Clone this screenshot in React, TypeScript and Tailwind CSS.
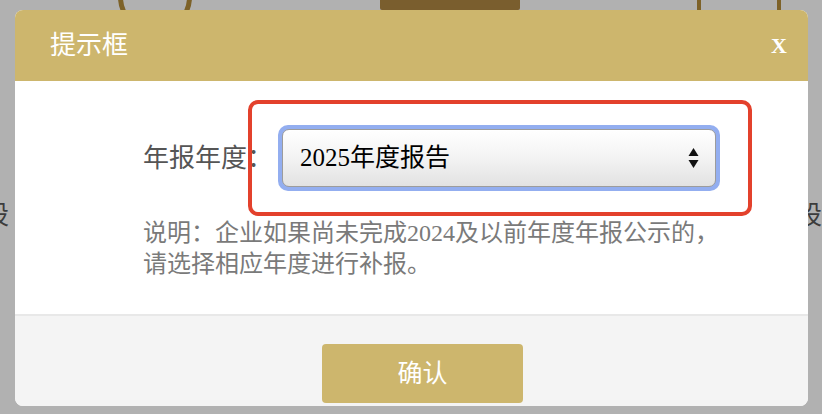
import React from "react";

const serif = "font-['Liberation_Serif','Noto_Sans_CJK_SC',serif]";

export default function App() {
  return (
    <div className={`relative w-[822px] h-[414px] overflow-hidden bg-[#b1b1b1] ${serif}`}>
      {/* page behind the overlay */}
      <div className="absolute left-[118px] top-[-40px] w-[74px] h-[74px] rounded-full border-[5px] border-[#7d6229]" />
      <div className="absolute left-[380px] top-0 w-[140px] h-[10px] bg-[#7a5e2e] rounded-b-[2px]" />
      <div className="absolute left-[697px] top-[-20px] w-[84px] h-[34px] border-[4px] border-[#7d6229]" />
      <div className="absolute left-[-17px] top-[196px] text-[26px] text-[#3c3c3c]">股</div>
      <div className="absolute left-[796px] top-[196px] text-[26px] text-[#3c3c3c]">股</div>

      {/* dialog */}
      <div className="relative pt-[10px] pl-[15px]">
        <div className="relative flex flex-col w-[793px] h-[396px] rounded-[8px] overflow-hidden bg-white">
          {/* Header */}
          <div className="flex items-center justify-between h-[71px] shrink-0 bg-[#cdb66d] pl-[35px] pr-[21px] text-white">
            <span className="text-[26px] leading-none">提示框</span>
            <span className="text-[22px] font-bold leading-none">X</span>
          </div>

          {/* Body */}
          <div className="h-[233px] shrink-0 pl-[128px] pt-[44px]">
            <div className="flex items-center">
              <span className="w-[135px] text-[26px] text-[#555555] whitespace-nowrap">年报年度：</span>
              <div className="rounded-[10px] bg-[#93aef0] p-[4px]">
                <div className="flex items-center justify-between w-[434px] h-[58px] rounded-[7px] border border-[#9c9c9c] bg-gradient-to-b from-white via-[#f3f3f3] to-[#e2e2e2] pl-[17px] pr-[16px] shadow-[inset_0_1px_0_#ffffff]">
                  <span className="text-[25px] text-black">2025年度报告</span>
                  <svg width="11" height="22" viewBox="0 0 11 22">
                    <path d="M5.5 1 L10.5 9 L0.5 9 Z" fill="#111" />
                    <path d="M0.5 13 L10.5 13 L5.5 21 Z" fill="#111" />
                  </svg>
                </div>
              </div>
            </div>
            <div className="mt-[27px] text-[24px] leading-[31px] text-[#7a7a7a]">
              <p>说明：企业如果尚未完成2024及以前年度年报公示的，</p>
              <p>请选择相应年度进行补报。</p>
            </div>
          </div>

          {/* Footer */}
          <div className="flex flex-1 justify-center border-t-2 border-[#e8e8e8] bg-[#f4f4f4] pt-[28px] pl-[22px]">
            <button className="w-[201px] h-[59px] rounded-[4px] bg-[#cdb66d] text-[25px] text-white">确认</button>
          </div>

          {/* red highlight annotation */}
          <div className="absolute left-[233px] top-[90px] w-[504px] h-[116px] rounded-[10px] border-[4px] border-[#e3412c]" />
        </div>
      </div>
    </div>
  );
}
